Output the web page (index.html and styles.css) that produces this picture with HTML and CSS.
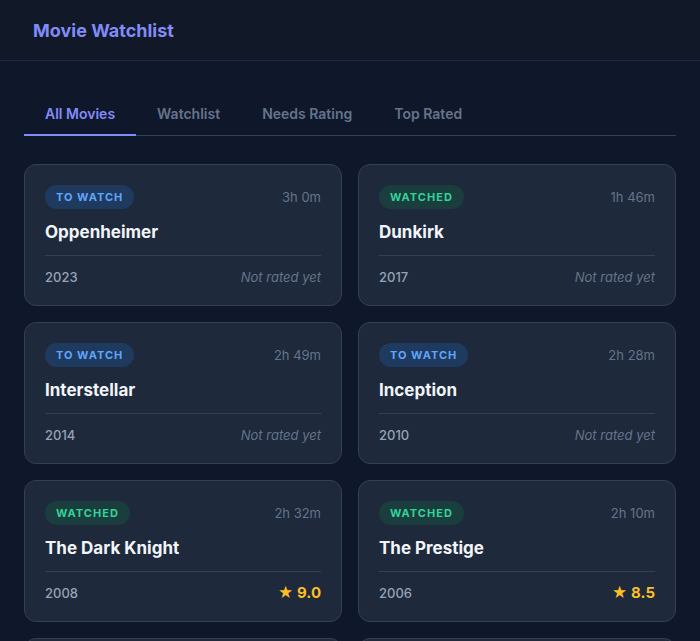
FILE: index.html
```html
<!DOCTYPE html>
<html>
<head>
    <title>Movie Watchlist</title>
    <link rel="stylesheet" href="styles.css">
</head>
<body>
    <!-- Top header -->
    <header class="app-header">
        <h1 class="app-title">Movie Watchlist</h1>
    </header>

    <main class="main">
        <!-- Filter tabs -->
        <nav class="tabs">
            <div class="tab active">All Movies</div>
            <div class="tab">Watchlist</div>
            <div class="tab">Needs Rating</div>
            <div class="tab">Top Rated</div>
        </nav>

        <!-- Movie cards -->
        <div class="movie-grid">
            <div class="movie-card">
                <div class="card-top">
                    <span class="badge to-watch">To Watch</span>
                    <span class="runtime">3h 0m</span>
                </div>
                <h3 class="movie-title">Oppenheimer</h3>
                <div class="card-bottom">
                    <span class="year">2023</span>
                    <span class="no-rating">Not rated yet</span>
                </div>
            </div>

            <div class="movie-card">
                <div class="card-top">
                    <span class="badge watched">Watched</span>
                    <span class="runtime">1h 46m</span>
                </div>
                <h3 class="movie-title">Dunkirk</h3>
                <div class="card-bottom">
                    <span class="year">2017</span>
                    <span class="no-rating">Not rated yet</span>
                </div>
            </div>

            <div class="movie-card">
                <div class="card-top">
                    <span class="badge to-watch">To Watch</span>
                    <span class="runtime">2h 49m</span>
                </div>
                <h3 class="movie-title">Interstellar</h3>
                <div class="card-bottom">
                    <span class="year">2014</span>
                    <span class="no-rating">Not rated yet</span>
                </div>
            </div>

            <div class="movie-card">
                <div class="card-top">
                    <span class="badge to-watch">To Watch</span>
                    <span class="runtime">2h 28m</span>
                </div>
                <h3 class="movie-title">Inception</h3>
                <div class="card-bottom">
                    <span class="year">2010</span>
                    <span class="no-rating">Not rated yet</span>
                </div>
            </div>

            <div class="movie-card">
                <div class="card-top">
                    <span class="badge watched">Watched</span>
                    <span class="runtime">2h 32m</span>
                </div>
                <h3 class="movie-title">The Dark Knight</h3>
                <div class="card-bottom">
                    <span class="year">2008</span>
                    <span class="rating">&#9733; 9.0</span>
                </div>
            </div>

            <div class="movie-card">
                <div class="card-top">
                    <span class="badge watched">Watched</span>
                    <span class="runtime">2h 10m</span>
                </div>
                <h3 class="movie-title">The Prestige</h3>
                <div class="card-bottom">
                    <span class="year">2006</span>
                    <span class="rating">&#9733; 8.5</span>
                </div>
            </div>

            <div class="movie-card">
                <div class="card-top">
                    <span class="badge watched">Watched</span>
                    <span class="runtime">1h 53m</span>
                </div>
                <h3 class="movie-title">Memento</h3>
                <div class="card-bottom">
                    <span class="year">2000</span>
                    <span class="rating">&#9733; 8.4</span>
                </div>
            </div>

            <div class="movie-card">
                <div class="card-top">
                    <span class="badge to-watch">To Watch</span>
                    <span class="runtime">2h 30m</span>
                </div>
                <h3 class="movie-title">Tenet</h3>
                <div class="card-bottom">
                    <span class="year">2020</span>
                    <span class="no-rating">Not rated yet</span>
                </div>
            </div>
        </div>
    </main>
</body>
</html>
```

FILE: styles.css
```css
/* Base page */
body {
    margin: 0;
    font-family: Inter, "Noto Sans", sans-serif;
    background-color: #0f172a;
    color: #e2e8f0;
}

/* Header bar */
.app-header {
    background-color: #111827;
    border-bottom: 1px solid #1e293b;
    height: 60px;
    padding: 0 33px;
    display: flex;
    align-items: center;
}

.app-title {
    margin: 0;
    font-size: 18px;
    font-weight: 700;
    color: #818cf8;
}

.main {
    padding: 32px 24px;
}

/* Tabs */
.tabs {
    display: flex;
    border-bottom: 1px solid #334155;
    margin-bottom: 28px;
}

.tab {
    padding: 12px 21px;
    font-size: 14px;
    font-weight: 600;
    color: #64748b;
    border-bottom: 2px solid transparent;
    margin-bottom: -1px;
    cursor: pointer;
}

.tab.active {
    color: #818cf8;
    border-bottom-color: #818cf8;
}

/* Card grid */
.movie-grid {
    display: grid;
    grid-template-columns: 1fr 1fr;
    gap: 16px;
}

.movie-card {
    background-color: #1e293b;
    border: 1px solid #334155;
    border-radius: 12px;
    padding: 20px;
}

.card-top {
    display: flex;
    justify-content: space-between;
    align-items: center;
}

.badge {
    font-size: 11px;
    font-weight: 700;
    letter-spacing: 1px;
    text-transform: uppercase;
    padding: 5px 11px;
    border-radius: 999px;
}

.badge.to-watch {
    background-color: #1e3a5f;
    color: #60a5fa;
}

.badge.watched {
    background-color: #1a3d3d;
    color: #34d399;
}

.runtime {
    font-size: 13px;
    color: #64748b;
}

.movie-title {
    margin: 13px 0 13px;
    font-size: 17px;
    font-weight: 700;
    color: #f1f5f9;
}

.card-bottom {
    display: flex;
    justify-content: space-between;
    align-items: center;
    border-top: 1px solid #334155;
    padding-top: 13px;
    line-height: 16px;
}

.year {
    font-size: 13px;
    font-weight: 500;
    color: #94a3b8;
}

.no-rating {
    font-size: 13px;
    font-style: italic;
    color: #64748b;
}

.rating {
    font-size: 15px;
    font-weight: 700;
    color: #fbbf24;
}
```
